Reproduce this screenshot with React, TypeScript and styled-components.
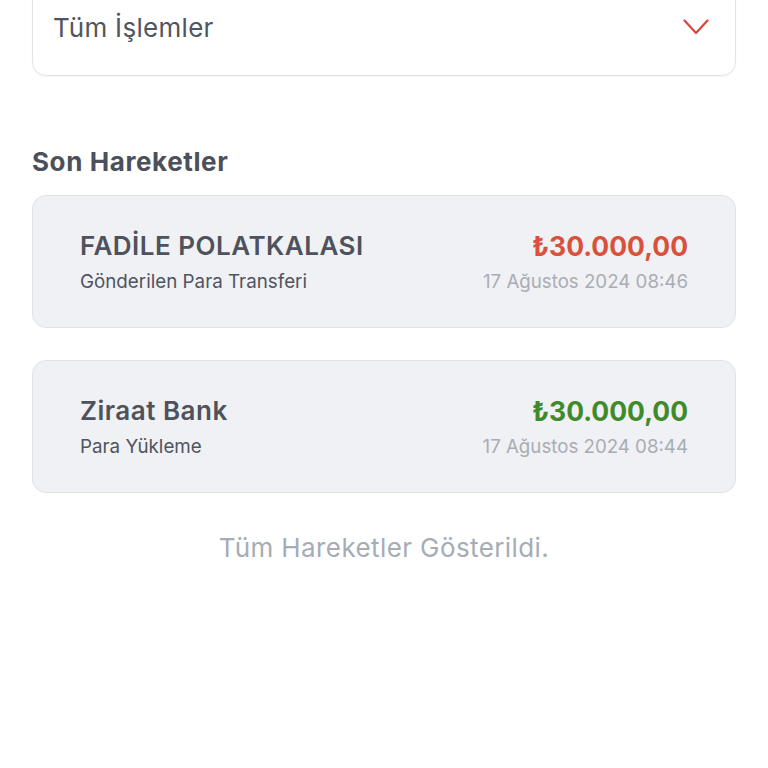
import React from "react";
import styled, { createGlobalStyle } from "styled-components";

const Global = createGlobalStyle`
  html, body { margin: 0; padding: 0; background: #ffffff; }
  body { font-family: Inter, "Noto Sans", sans-serif; overflow: hidden; }
`;

const Page = styled.div`
  width: 768px;
  height: 768px;
  box-sizing: border-box;
  padding: 0 32px;
  display: flex;
  flex-direction: column;
`;

const Select = styled.div`
  margin-top: -22px;
  height: 98px;
  box-sizing: border-box;
  border: 1.5px solid #e2e4e8;
  border-radius: 14px;
  background: #fff;
  display: flex;
  align-items: center;
  justify-content: space-between;
  padding: 0 26px 0 20px;
  box-shadow: 0 1px 2px rgba(0,0,0,0.04);
`;

const SelectLabel = styled.span`
  font-size: 26px;
  color: #505661;
  font-weight: 400;
  letter-spacing: 0.3px;
`;

const SectionTitle = styled.h2`
  margin: 70px 0 0;
  font-size: 26px;
  line-height: 32px;
  font-weight: 700;
  color: #4b505a;
  letter-spacing: 0.6px;
`;

const List = styled.div`
  margin-top: 17px;
  display: flex;
  flex-direction: column;
  gap: 32px;
`;

const Card = styled.div`
  height: 133px;
  box-sizing: border-box;
  background: #f0f1f4;
  border: 1.5px solid #e0e2e6;
  border-radius: 14px;
  display: flex;
  align-items: center;
  justify-content: space-between;
  padding: 2px 47px 0 47px;
`;

const Col = styled.div<{ $right?: boolean }>`
  display: flex;
  flex-direction: column;
  align-items: ${(p) => (p.$right ? "flex-end" : "flex-start")};
  gap: 9px;
`;

const Name = styled.div`
  font-size: 26px;
  line-height: 30px;
  font-weight: 600;
  color: #4d525c;
  letter-spacing: 0.5px;
`;

const Sub = styled.div`
  font-size: 18.8px;
  line-height: 24px;
  color: #4f545d;
`;

const Amount = styled.div<{ $color: string }>`
  font-size: 26.5px;
  line-height: 30px;
  font-weight: 700;
  color: ${(p) => p.$color};
`;

const DateText = styled.div`
  font-size: 18.7px;
  line-height: 24px;
  color: #a8adb5;
`;

const Footer = styled.div`
  margin-top: 39px;
  text-align: center;
  font-size: 26px;
  color: #a5acb6;
  letter-spacing: 0.4px;
`;

const Chevron = () => (
  <svg width="26" height="16" viewBox="0 0 26 16" fill="none">
    <path d="M1.5 1.5 L13 14 L24.5 1.5" stroke="#e0433a" strokeWidth="2.2" strokeLinecap="round" strokeLinejoin="round" />
  </svg>
);

const items = [
  { name: "FADİLE POLATKALASI", sub: "Gönderilen Para Transferi", amount: "₺30.000,00", color: "#d9513c", date: "17 Ağustos 2024 08:46" },
  { name: "Ziraat Bank", sub: "Para Yükleme", amount: "₺30.000,00", color: "#3f8a2a", date: "17 Ağustos 2024 08:44" },
];

export default function App() {
  return (
    <>
      <Global />
      <Page>
        <Select>
          <SelectLabel>Tüm İşlemler</SelectLabel>
          <Chevron />
        </Select>
        <SectionTitle>Son Hareketler</SectionTitle>
        <List>
          {items.map((it, i) => (
            <Card key={i}>
              <Col>
                <Name>{it.name}</Name>
                <Sub>{it.sub}</Sub>
              </Col>
              <Col $right>
                <Amount $color={it.color}>{it.amount}</Amount>
                <DateText>{it.date}</DateText>
              </Col>
            </Card>
          ))}
        </List>
        <Footer>Tüm Hareketler Gösterildi.</Footer>
      </Page>
    </>
  );
}
